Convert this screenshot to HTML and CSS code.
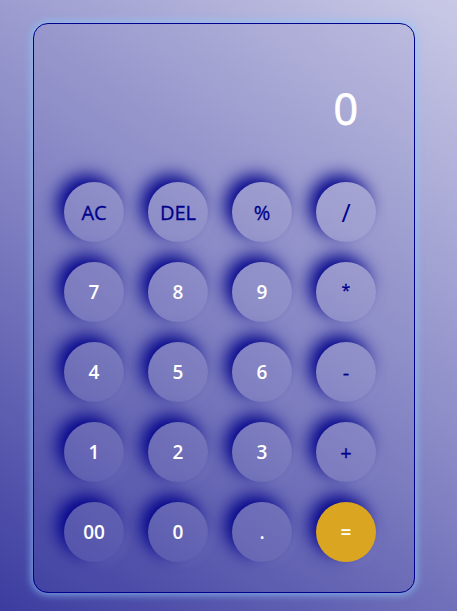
FILE: index.html
```html
<!DOCTYPE html>
<html>
<head>
<meta charset="utf-8">
<link rel="stylesheet" href="styles.css">
</head>
<body>
<div class="calc">
  <div class="display">0</div>
  <div class="keys">
    <button class="key op">AC</button>
    <button class="key op">DEL</button>
    <button class="key op">%</button>
    <button class="key op slash">/</button>
    <button class="key">7</button>
    <button class="key">8</button>
    <button class="key">9</button>
    <button class="key op small">*</button>
    <button class="key">4</button>
    <button class="key">5</button>
    <button class="key">6</button>
    <button class="key op">-</button>
    <button class="key">1</button>
    <button class="key">2</button>
    <button class="key">3</button>
    <button class="key op">+</button>
    <button class="key">00</button>
    <button class="key">0</button>
    <button class="key">.</button>
    <button class="key equal">=</button>
  </div>
</div>
</body>
</html>
```
FILE: styles.css
```css
html, body {
  margin: 0;
  padding: 0;
  height: 611px;
  overflow: hidden;
}
body {
  background: linear-gradient(35deg, #3c3ca0 0%, #8888c6 50%, #c9c9e6 100%);
  font-family: "Open Sans", "Noto Sans", sans-serif;
  padding: 23px 0 0 33px;
  box-sizing: border-box;
}
.calc {
  width: 312px;
  height: 568px;
  border: 1px solid #00008b;
  border-radius: 15px;
  box-shadow: 0 0 9px 1px rgba(140, 200, 250, 0.85);
  background: rgba(60, 60, 150, 0.04);
  padding: 0 38px 0 30px;
}
.display {
  height: 158px;
  box-sizing: border-box;
  padding: 62px 18px 0 0;
  text-align: right;
  color: #ffffff;
  font-size: 43px;
  line-height: 46px;
  font-weight: 500;
  -webkit-text-stroke: 0.8px #ffffff;
}
.keys {
  display: grid;
  grid-template-columns: repeat(4, 60px);
  column-gap: 24px;
  row-gap: 20px;
}
.key {
  width: 60px;
  height: 60px;
  border-radius: 50%;
  border: none;
  padding: 0;
  margin: 0;
  background: rgba(255, 255, 255, 0.05);
  box-shadow: -7px -7px 17px #00008b, 4px 4px 8px rgba(255, 255, 255, 0.08);
  color: #ffffff;
  font-family: "Open Sans", "Noto Sans", sans-serif;
  font-size: 19px;
  font-weight: 600;
}
.key.op {
  color: #00008b;
  font-weight: 500;
  font-size: 20px;
  -webkit-text-stroke: 0.3px #00008b;
}
.key.slash {
  font-size: 25px;
  -webkit-text-stroke: 0;
}
.key.small {
  font-size: 16px;
  padding-bottom: 4px;
}
.key.equal {
  background: #daa520;
}
```
